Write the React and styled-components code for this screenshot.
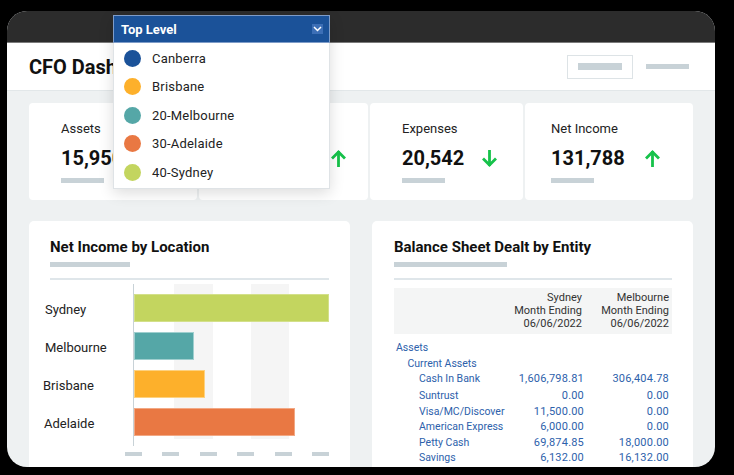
import React from "react";
import styled, { createGlobalStyle } from "styled-components";

const GlobalStyle = createGlobalStyle`
  body {
    margin: 0;
    background: #000;
    font-family: Roboto, "Noto Sans", sans-serif;
  }
`;

const Stage = styled.div`
  position: relative;
  width: 734px;
  height: 475px;
  padding: 11px 0 0 7px;
  box-sizing: border-box;
  overflow: hidden;
`;

const Screen = styled.div`
  width: 708px;
  height: 456px;
  border-radius: 20px;
  overflow: hidden;
  background: #eef1f2;
  display: flex;
  flex-direction: column;
`;

const TitleBar = styled.div`
  height: 31px;
  flex-shrink: 0;
  background: #2c2c2c;
  border-bottom: 1px solid #7b7b7b;
`;

const Header = styled.div`
  height: 47px;
  flex-shrink: 0;
  background: #fff;
  border-bottom: 1px solid #e2e7e9;
  display: flex;
  align-items: center;
  padding: 0 26px 0 22px;
`;

const Title = styled.h1`
  margin: 0;
  font-size: 20px;
  font-weight: 700;
  color: #111;
  flex: 1;
`;

const HeaderButton = styled.div`
  width: 64px;
  height: 22px;
  border: 1px solid #dde3e6;
  display: flex;
  align-items: center;
  justify-content: center;
`;

const Bar = styled.div`
  width: ${(p) => p.w}px;
  height: ${(p) => p.h || 5}px;
  margin-top: ${(p) => p.mt || 0}px;
  margin-left: ${(p) => p.ml || 0}px;
  background: #c8d2d7;
  flex-shrink: 0;
`;

const Content = styled.div`
  flex: 1;
  min-height: 0;
  padding: 12px 22px 0;
  display: flex;
  flex-direction: column;
  gap: 21px;
`;

const KpiRow = styled.div`
  display: grid;
  grid-template-columns: 168fr 169fr 153fr 168fr;
  gap: 2px;
  height: 97px;
  flex-shrink: 0;
`;

const KpiCard = styled.div`
  background: #fff;
  border-radius: 4px;
  padding: 17px 0 0 ${(p) => p.inset}px;
`;

const KpiLabel = styled.div`
  font-size: 13px;
  line-height: 18px;
  color: #222;
`;

const KpiValueRow = styled.div`
  display: flex;
  align-items: center;
  gap: ${(p) => p.gap}px;
  margin-top: 8px;
  height: 24px;
`;

const KpiValue = styled.div`
  font-size: 20px;
  font-weight: 700;
  color: #111;
`;

const ChartsRow = styled.div`
  flex: 1;
  min-height: 0;
  display: grid;
  grid-template-columns: 1fr 1fr;
  gap: 22px;
`;

const Card = styled.div`
  background: #fff;
  border-radius: 5px 5px 0 0;
  padding: 16px 21px 0 ${(p) => p.inset || 21}px;
  overflow: hidden;
`;

const CardTitle = styled.h2`
  margin: 0;
  font-size: 15px;
  line-height: 20px;
  font-weight: 700;
  color: #111;
`;

const Divider = styled.div`
  height: 2px;
  background: #dfe6ea;
  margin-top: 11px;
`;

const Chart = styled.div`
  display: grid;
  grid-template-columns: 88px 1fr;
  margin: 4px 0 0 -5px;
`;

const Labels = styled.div`
  display: flex;
  flex-direction: column;
  gap: 10px;
  padding-top: 10px;
`;

const Label = styled.div`
  height: 28px;
  line-height: 31px;
  font-size: 13px;
  color: #222;
  margin-left: ${(p) => p.nudge || 0}px;
`;

const Plot = styled.div`
  border-left: 1px solid #c8d2d7;
  padding: 10px 0;
  display: flex;
  flex-direction: column;
  gap: 10px;
  background: linear-gradient(
      to right,
      transparent 20.4%,
      #f5f5f5 20.4%,
      #f5f5f5 40.3%,
      transparent 40.3%,
      transparent 60.2%,
      #f5f5f5 60.2%,
      #f5f5f5 79.6%,
      transparent 79.6%
    )
    top left / 100% 155px no-repeat;
`;

const HBar = styled.div`
  height: 28px;
  box-sizing: border-box;
  background: ${(p) => p.color};
  border: 1px solid ${(p) => p.edge};
`;

const Ticks = styled.div`
  grid-column: 2;
  display: flex;
  justify-content: space-between;
  margin: 6px 0 0 -8px;
`;

const Table = styled.div`
  margin-top: 8px;
  font-size: 11px;
`;

const TableHead = styled.div`
  display: grid;
  grid-template-columns: minmax(0, 1fr) 88px 87px;
  background: #f4f5f5;
  padding: 3px 3px 4px 0;
  color: #333;
  line-height: 13px;
  text-align: right;
`;

const Row = styled.div`
  display: grid;
  grid-template-columns: minmax(0, 1fr) 90px 85px;
  padding-right: 3px;
  line-height: 15.5px;
  color: #2d61ab;
  margin-top: ${(p) => p.mt || 0}px;
`;

const RowLabel = styled.div`
  padding-left: ${(p) => 2 + p.level * 11.5}px;
  font-size: 10.5px;
  white-space: nowrap;
`;

const Num = styled.div`
  text-align: right;
  letter-spacing: 0.2px;
`;

const Dropdown = styled.div`
  position: absolute;
  left: 113px;
  top: 15px;
  width: 217px;
  box-shadow: 0 4px 14px rgba(0, 0, 0, 0.14);
`;

const DropHeader = styled.div`
  height: 26px;
  background: #1b5299;
  border: 1px solid #7e9cc8;
  display: flex;
  align-items: center;
  justify-content: space-between;
  padding: 0 6px 0 7px;
  color: #fff;
  font-size: 13px;
  font-weight: 700;
`;

const Chevron = styled.div`
  width: 11px;
  height: 10px;
  background: #3d6fb6;
  display: flex;
  align-items: center;
  justify-content: center;
`;

const DropList = styled.div`
  background: #fff;
  border: 1px solid #dfe3e6;
  border-top: none;
  padding: 1px 0;
`;

const Option = styled.div`
  height: 28.5px;
  display: flex;
  align-items: center;
  gap: 11px;
  padding-left: 10px;
  font-size: 13px;
  color: #222;
  letter-spacing: 0.2px;
`;

const Dot = styled.span`
  width: 17px;
  height: 17px;
  border-radius: 50%;
  background: ${(p) => p.color};
`;

const Arrow = ({ down }) => (
  <svg width="15" height="17" viewBox="0 0 15 17" fill="none">
    <g
      stroke="#16c24a"
      strokeWidth="2.8"
      strokeLinecap="square"
      transform={down ? "rotate(180 7.5 8.5)" : undefined}
    >
      <path d="M7.5 16V2.5" />
      <path d="M2 7.5L7.5 2L13 7.5" />
    </g>
  </svg>
);

const kpis = [
  { label: "Assets", value: "15,950", inset: 32, gap: 19 },
  { label: "Revenue", value: "152,330", inset: 32, gap: 26, up: true },
  { label: "Expenses", value: "20,542", inset: 32, gap: 18, down: true },
  { label: "Net Income", value: "131,788", inset: 26, gap: 20, up: true },
];

const locations = [
  { name: "Sydney", value: 100, color: "#c3d55f", edge: "#d3e08a" },
  { name: "Melbourne", value: 30.8, color: "#55a7a7", edge: "#9fcfcf" },
  { name: "Brisbane", value: 36.4, color: "#fdb02b", edge: "#fdd17f", nudge: -2 },
  { name: "Adelaide", value: 82.6, color: "#e97843", edge: "#f2a884", nudge: -1 },
];

const entities = [
  { name: "Canberra", color: "#1b5299" },
  { name: "Brisbane", color: "#fdb02b" },
  { name: "20-Melbourne", color: "#55a7a7" },
  { name: "30-Adelaide", color: "#e97843" },
  { name: "40-Sydney", color: "#c3d55f" },
];

const rows = [
  { label: "Assets", level: 0 },
  { label: "Current Assets", level: 1 },
  { label: "Cash In Bank", level: 2, a: "1,606,798.81", b: "306,404.78" },
  { label: "Suntrust", level: 2, a: "0.00", b: "0.00", mt: 1.5 },
  { label: "Visa/MC/Discover", level: 2, a: "11,500.00", b: "0.00" },
  { label: "American Express", level: 2, a: "6,000.00", b: "0.00" },
  { label: "Petty Cash", level: 2, a: "69,874.85", b: "18,000.00" },
  { label: "Savings", level: 2, a: "6,132.00", b: "16,132.00" },
];

export default function App() {
  return (
    <Stage>
      <GlobalStyle />
      <Screen>
        <TitleBar />
        <Header>
          <Title>CFO Dashboard</Title>
          <HeaderButton>
            <Bar w={44} h={7} />
          </HeaderButton>
          <Bar w={43} h={5} ml={13} />
        </Header>
        <Content>
          <KpiRow>
            {kpis.map((k) => (
              <KpiCard key={k.label} inset={k.inset}>
                <KpiLabel>{k.label}</KpiLabel>
                <KpiValueRow gap={k.gap}>
                  <KpiValue>{k.value}</KpiValue>
                  {(k.up || k.down) && <Arrow down={k.down} />}
                </KpiValueRow>
                <Bar w={43} mt={8} />
              </KpiCard>
            ))}
          </KpiRow>
          <ChartsRow>
            <Card>
              <CardTitle>Net Income by Location</CardTitle>
              <Bar w={80} mt={5} />
              <Divider />
              <Chart>
                <Labels>
                  {locations.map((l) => (
                    <Label key={l.name} nudge={l.nudge}>
                      {l.name}
                    </Label>
                  ))}
                </Labels>
                <Plot>
                  {locations.map((l) => (
                    <HBar
                      key={l.name}
                      color={l.color}
                      edge={l.edge}
                      style={{ width: `${l.value}%` }}
                    />
                  ))}
                </Plot>
                <Ticks>
                  {[0, 1, 2, 3, 4, 5].map((i) => (
                    <Bar key={i} w={17} h={4} />
                  ))}
                </Ticks>
              </Chart>
            </Card>
            <Card inset={22}>
              <CardTitle>Balance Sheet Dealt by Entity</CardTitle>
              <Bar w={113} mt={5} />
              <Divider />
              <Table>
                <TableHead>
                  <div />
                  <div>
                    Sydney
                    <br />
                    Month Ending
                    <br />
                    06/06/2022
                  </div>
                  <div>
                    Melbourne
                    <br />
                    Month Ending
                    <br />
                    06/06/2022
                  </div>
                </TableHead>
                {rows.map((r, i) => (
                  <Row key={r.label} mt={i === 0 ? 6 : r.mt}>
                    <RowLabel level={r.level}>{r.label}</RowLabel>
                    <Num>{r.a}</Num>
                    <Num>{r.b}</Num>
                  </Row>
                ))}
              </Table>
            </Card>
          </ChartsRow>
        </Content>
      </Screen>
      <Dropdown>
        <DropHeader>
          Top Level
          <Chevron>
            <svg width="9" height="6" viewBox="0 0 9 6" fill="none">
              <path d="M1 1L4.5 4.5L8 1" stroke="#fff" strokeWidth="1.5" />
            </svg>
          </Chevron>
        </DropHeader>
        <DropList>
          {entities.map((e) => (
            <Option key={e.name}>
              <Dot color={e.color} />
              {e.name}
            </Option>
          ))}
        </DropList>
      </Dropdown>
    </Stage>
  );
}
